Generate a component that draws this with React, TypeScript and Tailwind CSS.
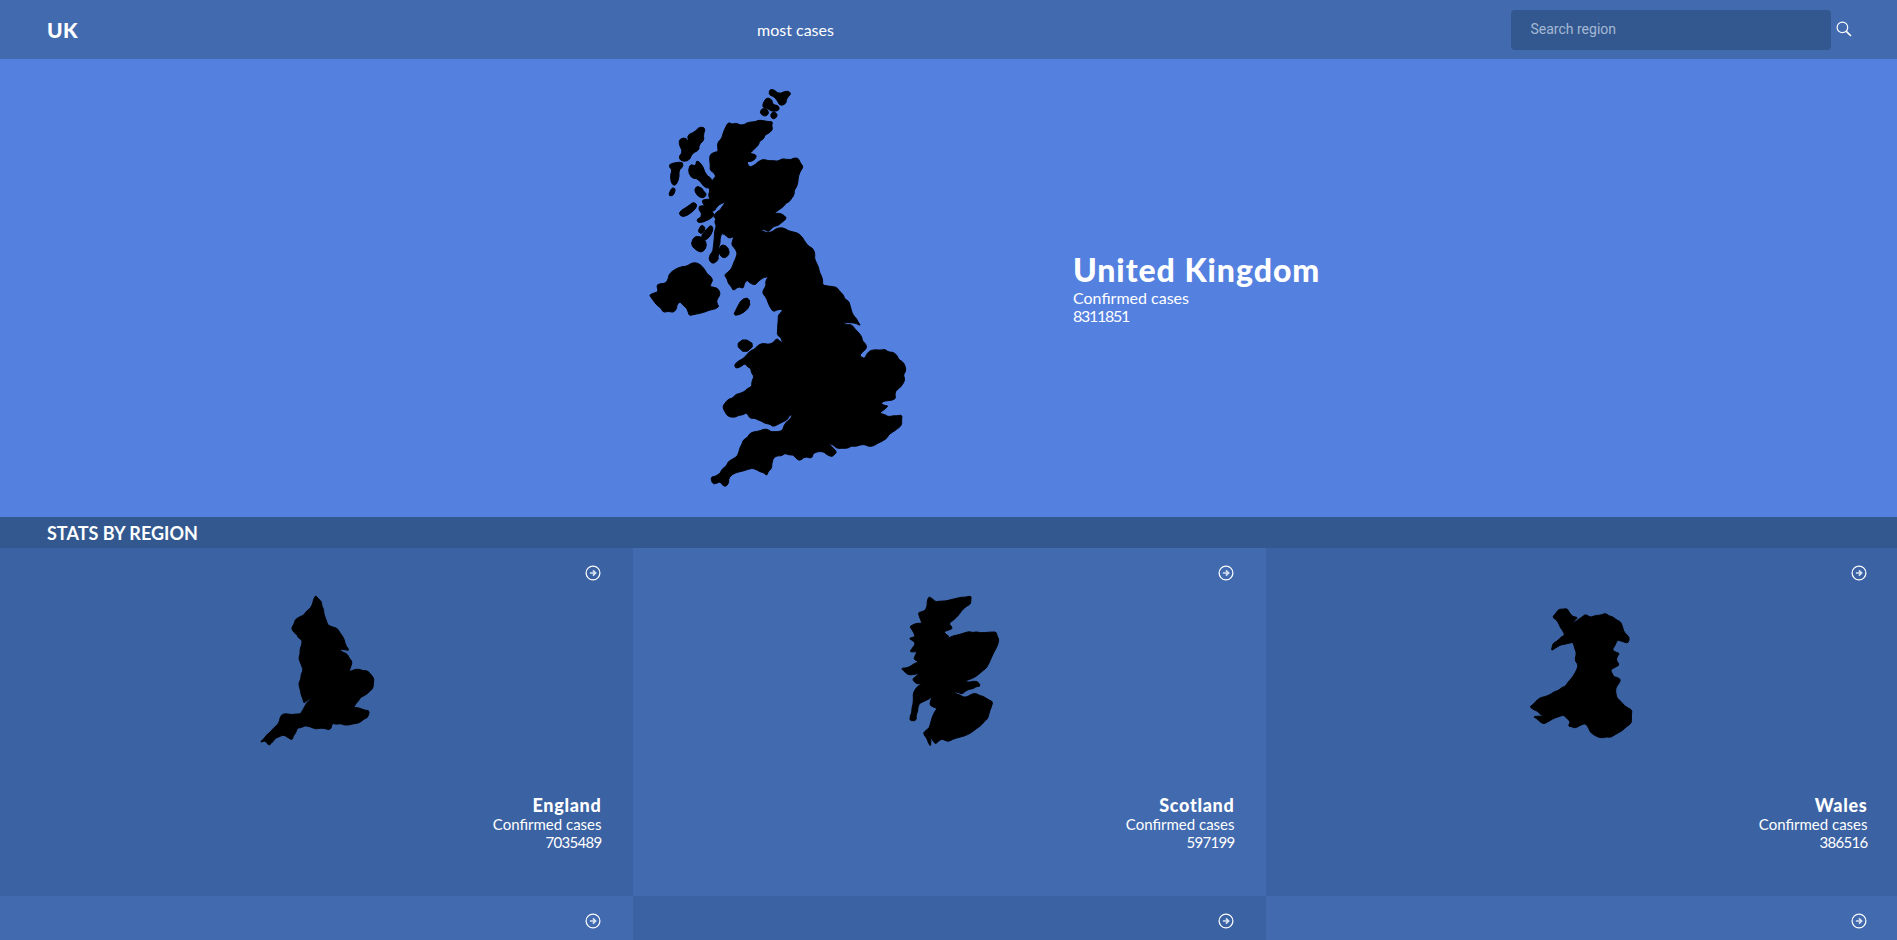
const UK_SHAPES: [string, number][] = [
  // Great Britain
  ["295,157 330,165 352,158 375,155 400,152 428,155 428,178 405,195 385,225 360,250 380,255 375,268 350,275 358,292 400,268 430,272 470,268 505,265 520,290 505,320 500,350 485,385 460,410 432,430 450,430 470,445 455,458 430,470 415,485 390,478 410,488 455,473 475,482 505,490 525,515 548,535 560,580 578,630 578,645 620,652 640,675 660,705 665,725 692,767 660,758 620,757 665,764 695,800 710,835 688,858 705,866 720,842 765,838 800,855 826,890 820,940 798,962 797,985 775,992 752,1000 775,1008 748,1030 775,1040 816,1035 815,1065 790,1085 770,1105 730,1128 690,1125 640,1135 620,1135 610,1125 596,1120 620,1145 605,1160 580,1145 550,1150 545,1165 525,1160 510,1172 490,1155 465,1150 430,1165 425,1195 410,1217 390,1205 368,1195 330,1205 305,1215 287,1250 270,1235 248,1242 242,1222 270,1210 295,1175 320,1160 340,1110 360,1090 400,1078 435,1085 458,1080 470,1055 499,1023 460,1055 430,1070 405,1060 385,1050 360,1045 350,1028 315,1042 295,1040 278,1010 295,988 330,970 365,950 372,920 362,895 345,880 318,895 313,885 350,855 385,825 430,818 440,805 467,822 442,795 445,735 458,718 430,725 415,700 398,670 400,660 415,620 390,630 375,645 350,630 340,655 325,650 310,662 295,640 283,615 305,595 322,550 305,525 312,500 296,505 275,490 270,520 265,570 248,582 237,570 250,530 255,480 258,445 250,440 278,408 287,396 270,402 252,424 225,410 215,392 240,388 235,350 258,320 240,300 240,255 265,245 262,225 275,205 285,175", 3],
  // Northern Isles
  ["418,60 430,58 447,72 470,62 484,70 470,85 467,102 450,107 442,92 432,80 418,75", 0],
  ["410,83 425,88 428,103 447,108 447,122 425,124 413,116 398,112 400,98", 0],
  ["395,116 410,116 417,130 405,140 390,130", 0],
  ["430,123 444,135 432,149 420,138", 0],
  // Hebrides
  ["210,170 226,175 220,195 222,210 207,225 207,240 187,250 177,272 155,274 146,262 158,245 148,225 148,208 165,203 175,213 173,195 193,186", 0],
  ["120,281 157,275 159,290 147,300 147,325 137,347 125,342 121,320 126,298 118,292", 0],
  ["125,353 137,356 130,377 115,377", 0],
  ["200,270 217,285 227,313 247,328 242,352 225,354 205,327 185,324 175,305 180,283 197,288", 0],
  ["200,348 217,355 220,363 230,372 222,384 205,380 193,362", 0],
  ["148,425 175,408 190,396 202,405 192,422 165,440 150,437", 0],
  ["203,410 225,406 252,428 247,444 210,460 198,450 218,438", 0],
  ["242,465 250,475 242,497 225,512 212,500 228,480", 0],
  ["190,503 205,498 225,508 230,530 217,547 200,542 183,525", 0],
  ["215,463 227,475 217,492 203,485", 0],
  ["275,523 292,530 299,550 287,564 272,560 266,540", 0],
  // Northern Ireland
  ["200,578 225,600 248,630 240,650 262,655 270,675 260,690 267,710 240,720 210,730 178,737 170,715 150,695 130,727 100,727 80,705 58,675 85,665 80,645 105,640 125,605 155,590", 3],
  // Isle of Man, Anglesey
  ["357,683 360,710 335,732 310,737 320,715 335,688", 0],
  ["343,805 374,825 345,850 318,825", 0],
];

const ENGLAND =
  "225,46 243,65 250,100 262,135 290,145 310,175 315,195 327,212 295,208 320,222 335,245 325,275 345,268 380,272 400,295 397,325 375,345 360,352 340,382 387,392 382,412 350,430 325,435 275,430 270,450 250,445 225,447 195,437 170,445 155,480 130,465 105,475 85,497 75,482 58,487 90,455 110,435 125,403 165,402 180,402 195,375 214,353 190,370 182,345 175,310 188,270 175,235 185,180 175,175 153,145 165,118 190,105 215,75";
const SCOTLAND =
  "145,50 165,65 200,62 240,52 272,48 270,72 245,90 225,115 205,130 217,145 190,155 207,170 180,180 230,165 265,155 300,158 347,156 355,178 347,205 332,235 317,265 285,290 253,305 292,305 300,318 265,328 245,342 218,335 250,352 285,340 310,350 337,365 327,395 322,415 297,440 265,462 235,472 205,484 185,477 165,492 150,470 150,499 140,477 128,460 145,445 158,405 170,385 148,375 155,350 135,362 117,370 107,405 107,422 88,422 98,370 98,340 108,322 125,310 108,312 95,298 115,280 85,285 62,265 88,260 115,245 100,238 110,215 88,215 105,190 85,175 105,170 88,140 108,130 125,130 113,98 135,90";
const WALES =
  "145,58 170,56 187,80 202,82 175,114 195,95 225,73 240,82 285,70 330,95 340,125 357,145 352,160 320,150 305,180 327,190 317,210 327,225 300,240 310,260 330,268 315,300 320,325 340,345 364,360 362,400 335,422 300,442 265,442 240,427 225,400 195,414 173,408 180,395 160,375 130,385 100,402 68,380 100,378 58,350 90,323 120,313 165,288 193,250 203,225 193,210 198,190 188,157 150,165 123,182 128,160 163,135 138,90 126,82";

// Turn a coarse outline into a coast: break long edges with small offsets, then round the corners.
function coast(points: string, amp: number) {
  let pts = points.split(" ").map((p) => p.split(",").map(Number));
  if (amp > 0) {
    const out: number[][] = [];
    pts.forEach((a, i) => {
      const b = pts[(i + 1) % pts.length];
      const dx = b[0] - a[0];
      const dy = b[1] - a[1];
      const len = Math.hypot(dx, dy);
      const n = Math.max(1, Math.round(len / 14));
      for (let k = 0; k < n; k++) {
        const t = k / n;
        const w = k === 0 ? 0 : amp * Math.sin((a[0] + k) * 12.9898 + (a[1] + k) * 78.233);
        out.push([a[0] + dx * t - (dy / len) * w, a[1] + dy * t + (dx / len) * w]);
      }
    });
    pts = out;
  }
  const cut: number[][] = [];
  pts.forEach((a, i) => {
    const b = pts[(i + 1) % pts.length];
    cut.push([a[0] * 0.75 + b[0] * 0.25, a[1] * 0.75 + b[1] * 0.25]);
    cut.push([a[0] * 0.25 + b[0] * 0.75, a[1] * 0.25 + b[1] * 0.75]);
  });
  return "M" + cut.map((p) => `${p[0].toFixed(1)} ${p[1].toFixed(1)}`).join("L") + "Z";
}

function Shape({ viewBox, shapes, className }: { viewBox: string; shapes: [string, number][]; className: string }) {
  return (
    <svg viewBox={viewBox} className={className}>
      {shapes.map(([p, amp], i) => (
        <path key={i} d={coast(p, amp)} fill="#000" stroke="#000" strokeWidth={3} strokeLinejoin="round" />
      ))}
    </svg>
  );
}

function ArrowCircle() {
  return (
    <svg viewBox="0 0 16 16" className="absolute right-8 top-[17px] h-4 w-4">
      <circle cx="8" cy="8" r="6.9" fill="none" stroke="#fff" strokeWidth="1.25" />
      <path d="M4.9 8h5.2M7.9 5.4 10.6 8 7.9 10.6" fill="none" stroke="#d9e3f2" strokeWidth="1.7" />
    </svg>
  );
}

function SearchGlyph() {
  return (
    <svg viewBox="0 0 16 16" className="-mt-0.5 ml-[5px] h-4 w-4">
      <circle cx="6.4" cy="6.4" r="5.3" fill="none" stroke="#fff" strokeWidth="1.2" />
      <path d="M10.3 10.3 15 15" fill="none" stroke="#fff" strokeWidth="1.7" />
    </svg>
  );
}

function Card({
  tone,
  name,
  value,
  map,
}: {
  tone: string;
  name?: string;
  value?: string;
  map?: { viewBox: string; points: string };
}) {
  return (
    <div className={`relative h-[348px] pt-8 ${tone}`}>
      <ArrowCircle />
      {map && <Shape viewBox={map.viewBox} shapes={[[map.points, 1.5]]} className="mx-auto block h-[170px] w-[150px]" />}
      {name && (
        <div className="mt-[45px] pr-[31.5px] text-right text-white">
          <div className="text-[18px] leading-[20px] font-black tracking-[0.7px]">{name}</div>
          <div className="text-[15px] leading-[18px]">Confirmed cases</div>
          <div className="text-[15px] leading-[19px] tracking-[-0.7px]">{value}</div>
        </div>
      )}
    </div>
  );
}

export default function App() {
  return (
    <div className="h-[940px] overflow-hidden bg-[#3b62a3] font-['Lato',sans-serif] text-white">
      <header className="flex h-[59px] items-center bg-[#416aaf] pl-[47px]">
        <div className="w-[710px] text-[21px] leading-none font-black tracking-[0.4px]">UK</div>
        <div className="w-[754px] text-[16px]">most cases</div>
        <div className="flex h-10 w-80 items-center rounded bg-[#33588f] pl-[19.5px] font-['Roboto',sans-serif] text-[14px] text-[#a5b8d3]">
          Search region
        </div>
        <SearchGlyph />
      </header>

      <section className="flex h-[458px] bg-[#5480e0] pl-[630px]">
        <Shape viewBox="0 0 900 1290" shapes={UK_SHAPES} className="mt-[11px] h-[430px] w-[300px]" />
        <div className="ml-[143px] self-center">
          <h1 className="text-[32px] leading-[38px] font-black tracking-[0.95px]">United Kingdom</h1>
          <div className="text-[16px] leading-[18px]">Confirmed cases</div>
          <div className="text-[16px] leading-[18px] tracking-[-1.3px]">8311851</div>
        </div>
      </section>

      <div className="flex h-[31px] items-center bg-[#33588f] pl-[47px] pt-0.5 text-[18px] font-bold">STATS BY REGION</div>

      <div className="grid grid-cols-[633px_633px_633px]">
        <Card tone="bg-[#3b62a3]" name="England" value="7035489" map={{ viewBox: "4.5 0 450 510", points: ENGLAND }} />
        <Card tone="bg-[#416aaf]" name="Scotland" value="597199" map={{ viewBox: "-16.5 0 450 510", points: SCOTLAND }} />
        <Card tone="bg-[#3b62a3]" name="Wales" value="386516" map={{ viewBox: "-7.5 -30 450 510", points: WALES }} />
        <Card tone="bg-[#416aaf]" />
        <Card tone="bg-[#3b62a3]" />
        <Card tone="bg-[#416aaf]" />
      </div>
    </div>
  );
}
